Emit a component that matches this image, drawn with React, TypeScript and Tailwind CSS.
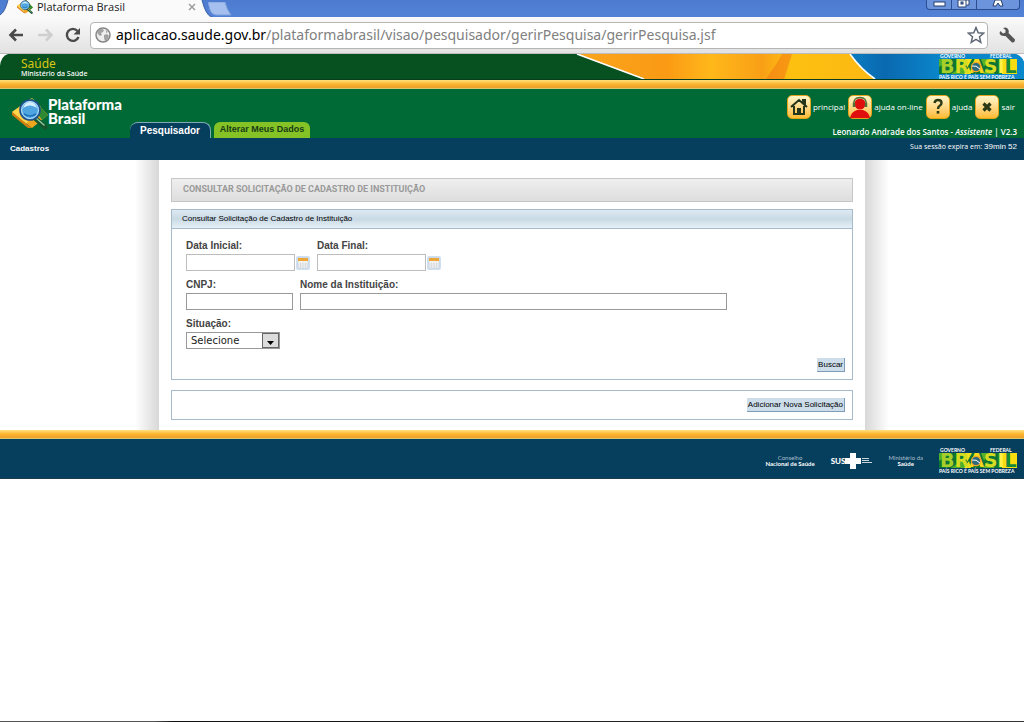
import React from "react";

function Magnifier({ className }: { className: string }) {
  return (
    <svg viewBox="0 0 36 34" className={className} aria-hidden="true">
      <path d="M20 1 36 18 20 31 0 15Z" fill="#f0a51e" />
      <path d="M20 1 29 10 14 27 0 15Z" fill="#ffd34a" />
      <path d="M20 1 36 18 30 23 17 5Z" fill="#2f8a34" />
      <path d="M0 15 16 28 20 31 16 31 0 18Z" fill="#d67d12" />
      <path d="M23 21 33 30" stroke="#17542b" strokeWidth="5" strokeLinecap="round" />
      <path d="M24 21 32 28" stroke="#8fc9a0" strokeWidth="1.5" strokeLinecap="round" />
      <circle cx="18" cy="13" r="10" fill="#4ea5e0" stroke="#1f4f86" strokeWidth="1.6" />
      <circle cx="18" cy="13" r="8.4" fill="none" stroke="#bfe4fb" strokeWidth="1" />
      <path d="M11 11q7-5 14 0-2-6-7-6t-7 6Z" fill="#d6effd" />
      <path d="M12 17q6 4 12 0" stroke="#1c70b8" strokeWidth="1.6" fill="none" />
    </svg>
  );
}

function BrasilLogo() {
  return (
    <svg
      viewBox="0 0 82 26"
      className="h-[26px] w-[82px] shrink-0"
      role="img"
      aria-label="Brasil"
      fontFamily="Lato, sans-serif"
      fontWeight="bold"
    >
      <text x="3" y="4" fontSize="5" fill="#fff">GOVERNO</text>
      <text x="53" y="4" fontSize="5" fill="#fff">FEDERAL</text>
      <rect x="2" y="5" width="60" height="15" fill="#0d7434" />
      <path d="M2 5H15L2 13ZM14 20 29 9V20Z" fill="#4fae2c" />
      <path d="M28 5H35L30 14ZM27 20 32 13 34 20Z" fill="#f3df1c" />
      <path d="M44 5H51L47 13ZM46 20 50 14 58 20Z" fill="#58b02c" />
      <rect x="61" y="5" width="19" height="15" fill="#f7dc12" />
      <path d="M61 5H65V20H61Z" fill="#188a37" />
      <text x="3" y="19" fontSize="19" fontFamily="'DejaVu Sans', sans-serif">
        <tspan fill="#a6d029">B</tspan>
        <tspan fill="#d5dc22">R</tspan>
        <tspan fill="#f7d81a">A</tspan>
        <tspan fill="#d5dc22">S</tspan>
        <tspan fill="#fff04a">I</tspan>
        <tspan fill="#16893a">L</tspan>
      </text>
      <circle cx="39" cy="13" r="4.6" fill="#2d6a7c" stroke="#f4a62a" strokeWidth="1.2" />
      <path d="M35 12q4-1 8 3" stroke="#fff" strokeWidth="1" fill="none" />
      <text x="2" y="25" fontSize="5" fill="#fff">PAÍS RICO É PAÍS SEM POBREZA</text>
    </svg>
  );
}

function GoldBar() {
  return (
    <div className="h-[9px] shrink-0 border-b border-[#d8c56c] bg-linear-to-b from-[#ffe27a] via-[#fbb52c] to-[#eca02c]" />
  );
}

function BrowserChrome() {
  return (
    <div className="font-['Open_Sans',sans-serif]">
      <div className="flex h-[17px] items-start justify-between bg-linear-to-b from-[#4d7bd0] to-[#5282d6]">
        <div className="flex">
          <div className="relative h-[17px] w-[212px]">
            <svg viewBox="0 0 212 17" className="absolute inset-0 h-full w-full" aria-hidden="true">
              <path d="M0 17V15Q5 12 8 0H202Q206 16 212 17Z" fill="#fafafa" />
              <path d="M0 15Q5 12 8 0M202 0Q206 16 212 17" fill="none" stroke="#3a5fa5" />
            </svg>
            <div className="relative flex h-[13px] items-center pl-[17px] pr-4">
              <Magnifier className="h-4 w-4" />
              <span className="ml-1 grow text-[11px] leading-3 text-[#222]">Plataforma Brasil</span>
              <button aria-label="Fechar guia" className="text-[#999]">
                <svg viewBox="0 0 8 8" className="h-2 w-2">
                  <path d="M1 1 7 7M7 1 1 7" stroke="currentColor" strokeWidth="1.4" />
                </svg>
              </button>
            </div>
          </div>
          <button aria-label="Nova guia" className="-ml-1">
            <svg viewBox="0 0 26 14" className="h-[14px] w-[26px]">
              <path d="M0 0H17Q19 8 23 13H8Q4 13 2 8Z" fill="#a5c0ee" stroke="#7d9fdc" />
            </svg>
          </button>
        </div>
        <div className="mr-1 flex h-[10px] divide-x divide-[#2c4f92] overflow-hidden rounded-b border border-t-0 border-[#2c4f92] bg-[#6c94dd]">
          <button aria-label="Minimizar" className="flex w-[25px] justify-center">
            <svg viewBox="0 0 13 8" className="h-2 w-[13px]">
              <rect x="1" y="2" width="11" height="4" fill="#fff" stroke="#27406f" />
            </svg>
          </button>
          <button aria-label="Restaurar" className="flex w-[25px] justify-center">
            <svg viewBox="0 0 14 8" className="h-2 w-[14px]">
              <path d="M4 0H12V5H10" fill="#fff" stroke="#27406f" />
              <path d="M1 0H9V7H1Z" fill="#fff" stroke="#27406f" />
              <rect x="4" y="2" width="2" height="2" fill="#6c94dd" stroke="#27406f" />
            </svg>
          </button>
          <button aria-label="Fechar" className="flex w-[42px] justify-center">
            <svg viewBox="0 0 14 8" className="h-2 w-[14px]">
              <path d="M4 0 2 6H5L7 3 9 6H12L10 0Z" fill="#fff" stroke="#27406f" />
            </svg>
          </button>
        </div>
      </div>
      <div className="flex h-[37px] items-center gap-[7px] border-b border-[#bcbcbc] bg-linear-to-b from-[#fafafa] to-[#e2e2e2] pl-2 pr-2">
        <div className="flex w-[75px] items-center justify-between pr-[2px]">
          <button aria-label="Voltar">
            <svg viewBox="0 0 17 14" className="h-[14px] w-[17px]">
              <path d="M15 7H3M8 1.500 2.500 7 8 12.500" fill="none" stroke="#4a4a4a" strokeWidth="2.600" />
            </svg>
          </button>
          <button aria-label="Avançar">
            <svg viewBox="0 0 17 14" className="h-[14px] w-[17px]">
              <path d="M1 7H14M9 1.500 14.500 7 9 12.500" fill="none" stroke="#cfcfcf" strokeWidth="2.600" />
            </svg>
          </button>
          <button aria-label="Recarregar">
            <svg viewBox="0 0 16 16" className="h-4 w-4">
              <path d="M12.500 4A6 6 0 1 0 13.500 10" fill="none" stroke="#4a4a4a" strokeWidth="2.400" />
              <path d="M15 1V7.500H8.500Z" fill="#4a4a4a" />
            </svg>
          </button>
        </div>
        <div className="flex h-[27px] min-w-0 grow items-center rounded border border-[#b5b5b5] bg-white pl-1 pr-[2px]">
          <svg viewBox="0 0 16 16" className="h-4 w-4 shrink-0" aria-hidden="true">
            <circle cx="8" cy="8" r="7" fill="#eee" stroke="#858585" strokeWidth="1.500" />
            <path d="M4 3q3-2 5 0l-1 2-2 1 1 2-2 1-3-3ZM9 8l3-1 2 2-2 4-2 1-1-3ZM11 3l2 2-2 1Z" fill="#a2a2a2" />
          </svg>
          <div className="ml-[5px] grow truncate font-['Noto_Sans',sans-serif] text-[14px] leading-5 text-[#808080]">
            <span className="text-black">aplicacao.saude.gov.br</span>
            /plataformabrasil/visao/pesquisador/gerirPesquisa/gerirPesquisa.jsf
          </div>
          <button aria-label="Favoritar">
            <svg viewBox="0 0 18 18" className="h-[18px] w-[18px]">
              <path d="M9 1.500 11.200 6.700 16.700 7.200 12.500 10.800 13.800 16.300 9 13.300 4.200 16.300 5.500 10.800 1.300 7.200 6.800 6.700Z" fill="#fff" stroke="#606775" strokeWidth="1.500" />
            </svg>
          </button>
        </div>
        <button aria-label="Configurações" className="ml-1">
          <svg viewBox="0 0 17 17" className="h-[17px] w-[17px]">
            <path d="M1.500 4 4 6.500 6.500 5.500 6.500 3 4 1Q8-.500 9.500 3 10 4.500 9.500 6L16 12.500Q16 16 13 15.500L6.500 9Q1 9.500 .500 6Z" fill="#555" />
          </svg>
        </button>
      </div>
    </div>
  );
}

function GovernmentBanner() {
  return (
    <div className="relative flex h-[26px] items-center justify-between border-b border-[#0a3d1d] bg-[#07501f] pl-[21px] pr-[5px]">
      <svg viewBox="0 0 464 26" className="absolute top-0 right-0 h-[25px] w-[464px]" preserveAspectRatio="none" aria-hidden="true">
        <defs>
          <linearGradient id="flag-yellow">
            <stop offset="0" stopColor="#f9a51c" />
            <stop offset=".3" stopColor="#fb9a14" />
            <stop offset=".45" stopColor="#ffb81a" />
            <stop offset=".62" stopColor="#f99f16" />
            <stop offset=".72" stopColor="#fdc010" />
            <stop offset="1" stopColor="#fcb813" />
          </linearGradient>
          <linearGradient id="flag-blue">
            <stop offset="0" stopColor="#0b7cc2" />
            <stop offset=".2" stopColor="#0a69b0" />
            <stop offset=".5" stopColor="#0b84c9" />
            <stop offset="1" stopColor="#0b87cc" />
          </linearGradient>
        </defs>
        <path d="M17 0H290L315 26H84Z" fill="url(#flag-yellow)" />
        <path d="M206 26 216 11 222 0 232 0 224 26Z" fill="#f47f14" opacity=".6" />
        <path d="M290 0H464V26H315Q302 17 290 0Z" fill="url(#flag-blue)" />
        <path d="M17 0 84 26M290 0Q301 16 315 26" fill="none" stroke="#fff" strokeWidth="1.600" />
        <path d="M456 0H464V8Q462 2 456 0Z" fill="#fff" />
      </svg>
      <svg viewBox="0 0 8 12" className="absolute top-0 left-0 h-3 w-2" aria-hidden="true">
        <path d="M0 0H8Q1 2 0 12Z" fill="#fff" />
      </svg>
      <div className="relative pt-[2px] font-['Noto_Sans',sans-serif]">
        <div className="text-[12px] leading-[13px] text-[#d9c714]">Saúde</div>
        <div className="text-[7px] leading-[8px] font-medium text-white">Ministério da Saúde</div>
      </div>
      <div className="relative">
        <BrasilLogo />
      </div>
    </div>
  );
}

const iconBox = "h-6 w-6 rounded-[5px] border border-[#e3a41c] bg-linear-to-b from-[#fff6c9] to-[#fdbb2a] shrink-0";

function ToolLink({ label, children }: { label: string; children: React.ReactNode }) {
  return (
    <a href="#" className="flex items-center gap-[2px]">
      <span className={iconBox}>
        <svg viewBox="0 0 22 22" className="h-full w-full" aria-hidden="true">
          {children}
        </svg>
      </span>
      <span>{label}</span>
    </a>
  );
}

function Header() {
  return (
    <header>
      <div className="flex h-[49px] items-stretch justify-between bg-[#006a37]">
        <div className="flex items-end">
          <div className="flex w-[130px] self-start pt-2 pl-[12px]">
            <Magnifier className="h-[34px] w-[36px] shrink-0" />
            <div className="font-['Lato',sans-serif] text-[15px] leading-[14px] font-black text-white">
              <span className="block">Plataforma</span>
              <span className="block">Brasil</span>
            </div>
          </div>
          <nav className="flex items-end gap-[3px] font-['Liberation_Sans',sans-serif] font-bold">
            <a href="#" className="flex h-4 w-[81px] items-center justify-center rounded-t-lg border-t border-r border-[#7fa9b5] bg-[#063e5e] text-[10px] text-white">
              Pesquisador
            </a>
            <a href="#" className="flex h-4 w-24 items-center justify-center rounded-t-md bg-[#84c225] text-[9px] whitespace-nowrap text-[#173b16]">
              Alterar Meus Dados
            </a>
          </nav>
        </div>
        <div className="flex flex-col items-end pt-[6px] pr-[7px] font-['Open_Sans',sans-serif] text-[8px] leading-3 font-semibold text-white">
          <div className="flex gap-[3px] pr-[2px] font-medium">
            <ToolLink label="principal">
              <path d="M3 11 11 4 19 11M6 10V18H16V10M15 7V4H17V9" fill="none" stroke="#23351a" strokeWidth="2" />
              <path d="M9 18V12H13V18Z" fill="#23351a" />
            </ToolLink>
            <ToolLink label="ajuda on-line">
              <circle cx="11" cy="8" r="5.500" fill="#e10e0e" />
              <path d="M1 22Q2 16 8 14H14Q20 16 21 22Z" fill="#e10e0e" />
              <path d="M5 9Q4 1.500 11 1.500T17 9" fill="none" stroke="#54703a" strokeWidth="1.500" />
              <path d="M5 7V11M17 7V11" stroke="#54703a" strokeWidth="2.500" />
            </ToolLink>
            <ToolLink label="ajuda">
              <path d="M7.500 7Q8 4 11 4 14.500 4 14.500 7 14.500 9 12.500 10 11 11 11 13" fill="none" stroke="#2b3a16" strokeWidth="2.400" />
              <rect x="9.700" y="15" width="2.600" height="2.600" fill="#2b3a16" />
            </ToolLink>
            <ToolLink label="sair">
              <path d="M7.500 7.500 14.500 14.500M14.500 7.500 7.500 14.500" stroke="#2b3a16" strokeWidth="3.200" />
            </ToolLink>
          </div>
          <p className="mt-[7px] whitespace-nowrap">
            Leonardo Andrade dos Santos - <em>Assistente</em> | V2.3
          </p>
        </div>
      </div>
      <div className="flex h-[22px] items-center justify-between bg-[#063e5e] pr-[7px] pl-[10px] text-white">
        <a href="#" className="font-['Liberation_Sans',sans-serif] text-[8px] font-bold">Cadastros</a>
        <p className="pb-1 font-['Open_Sans',sans-serif] text-[7px] leading-3 font-medium">
          Sua sessão expira em: <span className="font-['Liberation_Sans',sans-serif] text-[8px]">39min 52</span>
        </p>
      </div>
    </header>
  );
}

function DateField({ id, label }: { id: string; label: string }) {
  return (
    <div>
      <label htmlFor={id} className="block">{label}</label>
      <div className="flex items-center gap-[1px]">
        <input id={id} type="text" className="h-[17px] w-[109px] border border-[#bdbdbd] bg-white px-1 font-normal" />
        <button type="button" aria-label={`Calendário ${label}`}>
          <svg viewBox="0 0 14 14" className="h-[14px] w-[14px]">
            <rect width="14" height="14" rx="2" fill="#cfe0f2" />
            <rect x="2" y="2" width="10" height="10" fill="#f5f5f2" stroke="#c9ccd2" strokeWidth=".6" />
            <rect x="2" y="2" width="10" height="3" fill="#eca63a" />
            <path d="M4.500 6V12M7 6V12M9.500 6V12M2 8H12M2 10H12" stroke="#d0d5de" strokeWidth=".6" />
          </svg>
        </button>
      </div>
    </div>
  );
}

const actionButton =
  "h-[14px] border-r border-b border-[#7f9db9] bg-[#cddeea] px-px text-[8px] leading-3 text-black";

function SearchForm() {
  return (
    <form className="px-3 pt-[18px] pb-[10px] font-['Liberation_Sans',sans-serif]">
      <h1 className="flex h-6 items-center border border-[#c6c6c6] bg-linear-to-b from-[#efefef] to-[#dedede] px-[11px] font-['Roboto',sans-serif] text-[9px] font-bold text-[#9a9a9a]">
        CONSULTAR SOLICITAÇÃO DE CADASTRO DE INSTITUIÇÃO
      </h1>
      <section className="mt-[7px] border border-[#a6bac9]">
        <h2 className="flex h-[19px] items-center border-b border-[#a6bac9] bg-linear-to-b from-[#dfeaf2] via-[#c9dae5] to-[#e6f0f6] px-[10px] text-[8px] text-black">
          Consultar Solicitação de Cadastro de Instituição
        </h2>
        <div className="flex flex-col px-[14px] pt-[9px] text-[10px] leading-[16px] font-bold text-[#444]">
          <div className="flex gap-[7px]">
            <DateField id="data-inicial" label="Data Inicial:" />
            <DateField id="data-final" label="Data Final:" />
          </div>
          <div className="mt-[6px] flex gap-[7px]">
            <div>
              <label htmlFor="cnpj" className="block">CNPJ:</label>
              <input id="cnpj" type="text" className="block h-[17px] w-[107px] border border-[#999] bg-white px-1 font-normal" />
            </div>
            <div className="max-w-[427px] grow">
              <label htmlFor="nome" className="block">Nome da Instituição:</label>
              <input id="nome" type="text" className="block h-[17px] w-full border border-[#999] bg-white px-1 font-normal" />
            </div>
          </div>
          <div className="mt-[6px]">
            <label htmlFor="situacao" className="block">Situação:</label>
            <div className="relative w-[94px]">
              <select id="situacao" className="block h-[17px] w-full appearance-none border border-[#999] bg-white pl-1 text-[10px] leading-[15px] font-normal text-[#222] font-['DejaVu_Sans',sans-serif]">
                <option>Selecione</option>
              </select>
              <svg viewBox="0 0 17 15" className="pointer-events-none absolute top-px right-px h-[15px] w-[17px]" aria-hidden="true">
                <rect x=".5" y=".5" width="16" height="14" fill="#dcdcdc" stroke="#666" />
                <path d="M5 8H12L8.500 12Z" fill="#000" />
              </svg>
            </div>
          </div>
        </div>
        <div className="flex justify-end px-[7px] pt-[9px] pb-[7px]">
          <button type="button" className={actionButton}>Buscar</button>
        </div>
      </section>
      <section className="mt-[10px] flex h-[30px] items-center justify-end border border-[#a6bac9] px-[7px]">
        <button type="button" className={actionButton}>Adicionar Nova Solicitação</button>
      </section>
    </form>
  );
}

function Footer() {
  return (
    <footer className="flex h-10 items-center justify-end border-b border-[#1d3c4c] bg-[#063e5e] pt-1 pr-[5px] font-['Lato',sans-serif] text-[6px] leading-[6px] text-white">
      <div className="text-center">
        <div className="text-[#a9bfcb]">Conselho</div>
        <div className="font-bold">Nacional de Saúde</div>
      </div>
      <div className="ml-4 flex items-center">
        <span className="text-[8px] font-black">SUS</span>
        <svg viewBox="0 0 16 16" className="h-4 w-4" aria-hidden="true">
          <path d="M5 0H11V5H16V11H11V16H5V11H0V5H5Z" fill="#fff" />
        </svg>
        <svg viewBox="0 0 10 6" className="ml-px h-[6px] w-[10px]" aria-hidden="true">
          <path d="M0 .5H7M0 2.500H7M0 4.500H10" stroke="#c7d5dd" strokeWidth="1" />
        </svg>
      </div>
      <div className="ml-4 text-center">
        <div className="text-[#a9bfcb]">Ministério da</div>
        <div className="font-bold">Saúde</div>
      </div>
      <div className="ml-[14px]">
        <BrasilLogo />
      </div>
    </footer>
  );
}

export default function App() {
  return (
    <div className="flex min-h-screen flex-col bg-white">
      <BrowserChrome />
      <GovernmentBanner />
      <GoldBar />
      <Header />
      <main className="flex justify-center">
        <div className="w-6 bg-linear-to-l from-[#d8d8d8] to-white" />
        <div className="max-w-[706px] grow">
          <SearchForm />
        </div>
        <div className="w-6 bg-linear-to-r from-[#d8d8d8] to-white" />
      </main>
      <GoldBar />
      <Footer />
      <div className="mt-auto h-px bg-linear-to-r from-[#555] from-15% via-[#111] via-17% to-[#333]" />
    </div>
  );
}
